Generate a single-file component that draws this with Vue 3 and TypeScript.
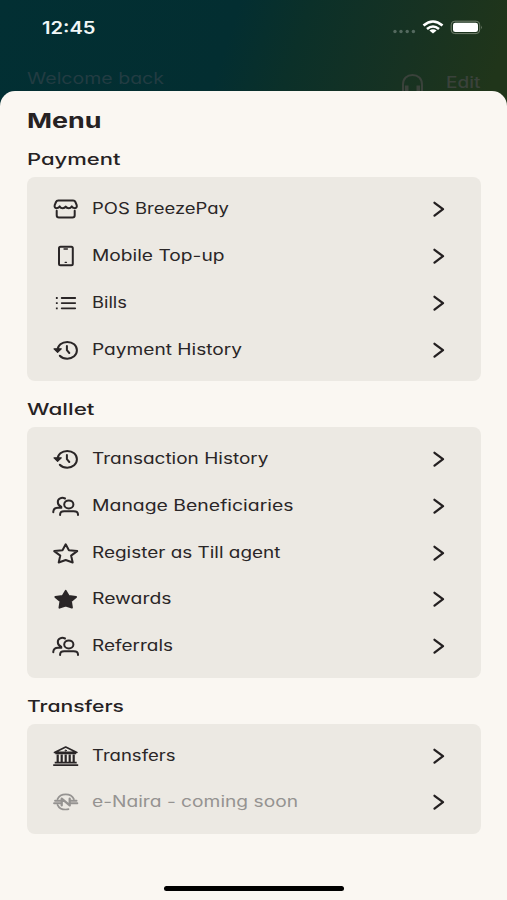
<script setup lang="ts">
type IconName = 'store' | 'phone' | 'list' | 'history' | 'people' | 'star' | 'starFilled' | 'bank' | 'naira'

interface MenuItem {
  label: string
  width: number
  icon: IconName
  disabled?: boolean
}

interface MenuSection {
  title: string
  width: number
  items: MenuItem[]
}

const sections: MenuSection[] = [
  {
    title: 'Payment',
    width: 93.5,
    items: [
      { label: 'POS BreezePay', width: 137, icon: 'store' },
      { label: 'Mobile Top-up', width: 132.5, icon: 'phone' },
      { label: 'Bills', width: 35, icon: 'list' },
      { label: 'Payment History', width: 150, icon: 'history' },
    ],
  },
  {
    title: 'Wallet',
    width: 67.5,
    items: [
      { label: 'Transaction History', width: 176.5, icon: 'history' },
      { label: 'Manage Beneficiaries', width: 201.5, icon: 'people' },
      { label: 'Register as Till agent', width: 188.5, icon: 'star' },
      { label: 'Rewards', width: 79.5, icon: 'starFilled' },
      { label: 'Referrals', width: 81, icon: 'people' },
    ],
  },
  {
    title: 'Transfers',
    width: 97,
    items: [
      { label: 'Transfers', width: 83.5, icon: 'bank' },
      { label: 'e-Naira - coming soon', width: 206, icon: 'naira', disabled: true },
    ],
  },
]
</script>

<template>
  <div class="screen">
    <header class="backdrop">
      <div class="status">
        <svg class="time" width="60" height="24"><text x="0" y="18.600" textLength="53.500" lengthAdjust="spacingAndGlyphs">12:45</text></svg>
        <svg class="indicators" width="94" height="20" viewBox="390 17 94 20">
          <g fill="#54695f">
            <circle cx="395" cy="31.500" r="1.700" /><circle cx="401" cy="31.500" r="1.700" />
            <circle cx="407.200" cy="31.500" r="1.700" /><circle cx="413.400" cy="31.500" r="1.700" />
          </g>
          <g fill="none" stroke="#fff" stroke-width="2.600">
            <path d="M423.500 25.600Q433 17.400 442.500 25.600" />
            <path d="M427 29Q433 24 439 29" />
          </g>
          <path d="M429.400 30.600Q433 27.900 436.600 30.600L433 33.500Z" fill="#fff" />
          <rect x="451.200" y="21.200" width="28.500" height="12.400" rx="3.600" fill="none" stroke="#74816f" stroke-width="1" />
          <rect x="453" y="22.700" width="25" height="9.400" rx="2.300" fill="#fff" />
          <path d="M481.200 25.400q1.700 1.900 0 3.900Z" fill="#74816f" />
        </svg>
      </div>
      <div class="greeting">
        <svg width="150" height="24"><text x="0" y="17" textLength="137" lengthAdjust="spacingAndGlyphs">Welcome back</text></svg>
        <div class="actions">
          <svg width="26" height="22" viewBox="0 0 26 22" fill="none" stroke="#3a423b">
            <path d="M3 16V11.500C3 5.500 7 2 12.500 2S22 5.500 22 11.500V16" stroke-width="2" />
            <path d="M6.700 12.500V19M18.300 12.500V19" stroke-width="3.600" />
            <path d="M3 15V20H6M22 15V20H19" stroke-width="2" />
          </svg>
          <svg class="edit" width="36" height="22"><text x="0" y="15.400" textLength="34.500" lengthAdjust="spacingAndGlyphs">Edit</text></svg>
        </div>
      </div>
    </header>

    <main class="sheet">
      <h1 class="title">
        <svg width="100" height="40"><text x="0" y="37" textLength="74.500" lengthAdjust="spacingAndGlyphs">Menu</text></svg>
      </h1>
      <section v-for="section in sections" :key="section.title">
        <h2 class="heading">
          <svg width="200" height="46"><text x="0" y="34" :textLength="section.width" lengthAdjust="spacingAndGlyphs">{{ section.title }}</text></svg>
        </h2>
        <ul class="card">
          <li v-for="item in section.items" :key="item.label" class="row" :class="{ disabled: item.disabled }">
            <svg class="icon" width="28" height="24" viewBox="0.300 0 28 24">
              <g v-if="item.icon === 'store'">
                <path d="M6.600 3.600H21.400Q23.100 3.600 23.700 5L25 8.200Q25.600 10.900 23.200 11.200Q20.700 11.200 20 9.400Q19 11.200 17 11.200Q15 11.200 14 9.600Q13 11.200 11 11.200Q9 11.200 8 9.400Q7.300 11.200 4.800 11.200Q2.400 10.900 3 8.200L4.300 5Q4.900 3.600 6.600 3.600Z" />
                <path d="M5 13.800V18.300Q5 20.600 7.300 20.600H20.700Q23 20.600 23 18.300V13.800" />
              </g>
              <g v-else-if="item.icon === 'phone'">
                <rect x="7.300" y="2.800" width="13.800" height="18.400" rx="1.500" />
                <path d="M12.300 5H15.700M13.400 18.300H14.800" stroke-width="1.300" />
              </g>
              <g v-else-if="item.icon === 'list'">
                <path d="M10 7H23.500M10 12.100H23.500M10 17.300H23.500" stroke-width="1.800" />
                <path d="M4.200 7H6M4.200 12.100H6M4.200 17.300H6" stroke-width="1.800" stroke-linecap="butt" />
              </g>
              <g v-else-if="item.icon === 'history'">
                <path d="M5.900 12.200C5.900 7.300 10.100 3.900 15.600 3.900S25.200 7.500 25.200 12.300S21 20.700 15.600 20.700C12.400 20.700 9.900 19.700 8.100 17.800" />
                <path class="solid" d="M2.300 10.800H9.600L5.900 14.400Z" stroke-width="1.200" />
                <path d="M15.200 7.900V12.200L17.600 15" />
              </g>
              <g v-else-if="item.icon === 'people'">
                <ellipse cx="17.100" cy="10.400" rx="4.600" ry="4" />
                <path d="M8.400 21V20.500Q8.400 17.200 12.400 17.200H22Q26.300 17.200 26.300 20.500V21" />
                <path d="M13.300 4.500C10 2.800 6.100 4.500 6.100 8C6.100 10.200 7.400 11.900 9.500 12.600M1.600 18.300V17.500Q2 13.700 6.300 13.700H9.700" />
              </g>
              <path v-else-if="item.icon === 'star'" d="M14 3.300L17.200 9.300L25.500 10.100L19.400 14.600L21 21.500L14 19L7 21.500L8.600 14.600L2.500 10.100L10.800 9.300Z" />
              <path v-else-if="item.icon === 'starFilled'" class="solid" d="M14 3.900L17 9L24.300 10L19.200 14.200L20.200 20.600L14 18.600L7.800 20.600L8.800 14.200L3.700 10L11 9Z" />
              <g v-else-if="item.icon === 'bank'">
                <path d="M2.800 8.400L14 3.100L25.200 8.400Z" stroke-width="1.700" />
                <path d="M6 10.500V18.500M10 10.500V18.500M14 10.500V18.500M18 10.500V18.500M22 10.500V18.500" stroke-width="2.200" stroke-linecap="butt" />
                <path d="M3.600 9.400H24.400M3 18.600H25M1.500 21.200H26.500" stroke-width="1.700" stroke-linecap="butt" />
                <circle cx="14" cy="6.600" r="0.600" stroke-width="1" />
              </g>
              <g v-else>
                <path d="M5.800 9.200C7.200 6 10.300 4.300 14 4.300S20.800 6 22.200 9.200M5.800 14.800C7.200 18 10.300 19.500 14 19.500Q15.600 19.500 16.800 19.100" stroke-width="1.700" />
                <path d="M3.400 10.700H9M19 10.700H24.800M2.400 13.200H9M19 13.200H25.600" stroke-width="2" />
                <path d="M10 15.400V8.700L18 15.400V8.700" stroke-width="2.300" />
              </g>
            </svg>
            <svg class="label" width="230" height="24"><text x="0" y="16.700" :textLength="item.width" lengthAdjust="spacingAndGlyphs">{{ item.label }}</text></svg>
            <svg class="chevron" width="14" height="18" viewBox="0 0 14 18"><path d="M2.500 2.800L11 9.200L2.500 15.600" /></svg>
          </li>
        </ul>
      </section>
      <div class="home-bar"></div>
    </main>
  </div>
</template>

<style>
body {
  margin: 0;
  overflow: hidden;
}
</style>

<style scoped>
.screen {
  display: flex;
  flex-direction: column;
  width: 507px;
  height: 900px;
  overflow: hidden;
  background: linear-gradient(108deg, #022f33 0%, #032e31 44%, #0b3029 57%, #173222 78%, #20351a 95%) 0 0 / 507px 120px no-repeat;
  font-family: Inter, "Liberation Sans", sans-serif;
  font-feature-settings: "cv11" 1;
}
svg {
  display: block;
  flex: none;
  overflow: visible;
}
.backdrop {
  box-sizing: border-box;
  height: 91.200px;
  flex: none;
  padding: 15px 24px 0 27px;
}
.status {
  display: flex;
  justify-content: space-between;
  padding-left: 14.500px;
}
.time {
  fill: #f2f7f7;
  font-size: 17px;
  font-weight: 600;
}
.indicators {
  margin: 2px -1px 0 0;
}
.greeting {
  display: flex;
  justify-content: space-between;
  padding-top: 27.500px;
  fill: #223c42;
  font-size: 15.500px;
}
.actions {
  display: flex;
  gap: 20px;
  margin-right: 1px;
  padding-top: 6px;
}
.edit {
  fill: #3a423b;
  font-weight: 500;
}
.sheet {
  box-sizing: border-box;
  position: relative;
  flex: 1;
  padding: 0 26px 0 27px;
  border-radius: 15px 15px 0 0;
  background: #faf7f2;
}
.title,
.heading {
  margin: 0;
  fill: #262223;
}
.title {
  height: 40.200px;
  font-size: 20.500px;
  font-weight: 700;
}
.heading {
  height: 46px;
  font-size: 16.500px;
  font-weight: 500;
}
.card {
  margin: 0;
  padding: 8.150px 35px 8.150px 25px;
  border-radius: 8px;
  background: #ece9e3;
  list-style: none;
}
.row {
  display: flex;
  align-items: center;
  height: 46.900px;
  color: #2a2627;
}
.disabled {
  color: #959391;
}
.icon {
  fill: none;
  stroke: currentColor;
  stroke-width: 2;
  stroke-linecap: round;
  stroke-linejoin: round;
}
.solid {
  fill: currentColor;
}
.label {
  margin-left: 12px;
  fill: currentColor;
  font-size: 15.200px;
  font-weight: 400;
}
.chevron {
  margin-left: auto;
  fill: none;
  stroke: #242021;
  stroke-width: 2.300;
  stroke-linecap: round;
  stroke-linejoin: round;
}
.home-bar {
  width: 180px;
  height: 5px;
  margin: 51.900px auto 0;
  border-radius: 3px;
  background: #000;
}
</style>
